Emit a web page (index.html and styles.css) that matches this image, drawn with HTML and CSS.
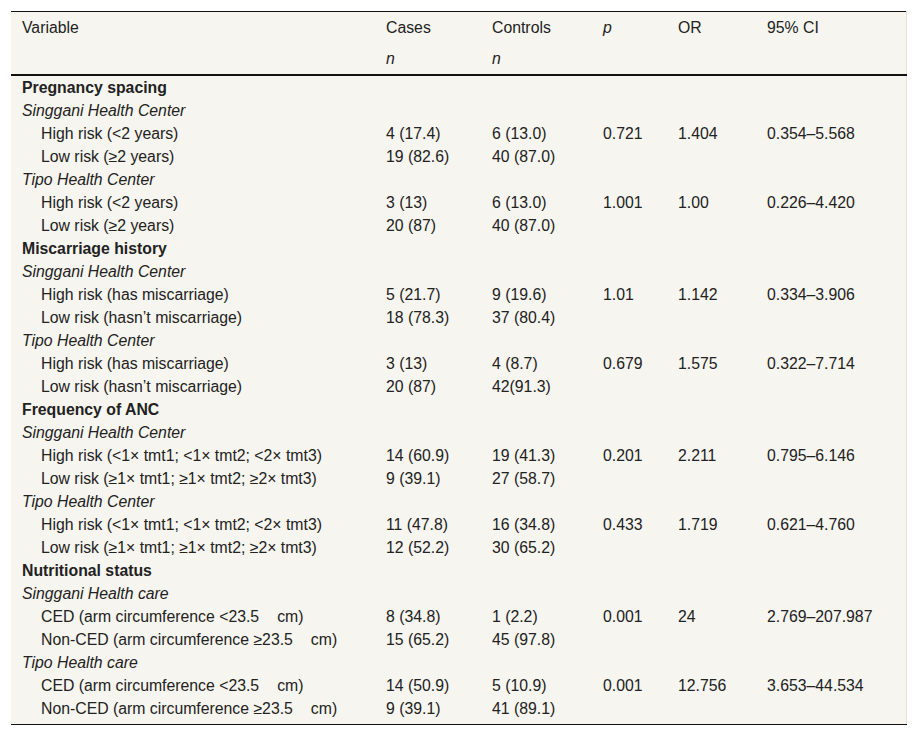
FILE: index.html
```html
<!DOCTYPE html>
<html lang="en">
<head>
<meta charset="utf-8">
<title>Table</title>
<link rel="stylesheet" href="styles.css">
</head>
<body>
<div class="wrap">
<table class="data">
<colgroup>
<col class="c-var"><col class="c-cases"><col class="c-ctrl"><col class="c-p"><col class="c-or"><col class="c-ci">
</colgroup>
<thead>
<tr class="h1"><th>Variable</th><th>Cases</th><th>Controls</th><th><i>p</i></th><th>OR</th><th>95% CI</th></tr>
<tr class="h2"><th></th><th><i>n</i></th><th><i>n</i></th><th></th><th></th><th></th></tr>
</thead>
<tbody>
<tr><td class="sec">Pregnancy spacing</td><td></td><td></td><td></td><td></td><td></td></tr>
<tr><td class="sub">Singgani Health Center</td><td></td><td></td><td></td><td></td><td></td></tr>
<tr><td class="ind">High risk (&lt;2 years)</td><td>4 (17.4)</td><td>6 (13.0)</td><td>0.721</td><td>1.404</td><td>0.354–5.568</td></tr>
<tr><td class="ind">Low risk (≥2 years)</td><td>19 (82.6)</td><td>40 (87.0)</td><td></td><td></td><td></td></tr>
<tr><td class="sub">Tipo Health Center</td><td></td><td></td><td></td><td></td><td></td></tr>
<tr><td class="ind">High risk (&lt;2 years)</td><td>3 (13)</td><td>6 (13.0)</td><td>1.001</td><td>1.00</td><td>0.226–4.420</td></tr>
<tr><td class="ind">Low risk (≥2 years)</td><td>20 (87)</td><td>40 (87.0)</td><td></td><td></td><td></td></tr>
<tr><td class="sec">Miscarriage history</td><td></td><td></td><td></td><td></td><td></td></tr>
<tr><td class="sub">Singgani Health Center</td><td></td><td></td><td></td><td></td><td></td></tr>
<tr><td class="ind">High risk (has miscarriage)</td><td>5 (21.7)</td><td>9 (19.6)</td><td>1.01</td><td>1.142</td><td>0.334–3.906</td></tr>
<tr><td class="ind">Low risk (hasn’t miscarriage)</td><td>18 (78.3)</td><td>37 (80.4)</td><td></td><td></td><td></td></tr>
<tr><td class="sub">Tipo Health Center</td><td></td><td></td><td></td><td></td><td></td></tr>
<tr><td class="ind">High risk (has miscarriage)</td><td>3 (13)</td><td>4 (8.7)</td><td>0.679</td><td>1.575</td><td>0.322–7.714</td></tr>
<tr><td class="ind">Low risk (hasn’t miscarriage)</td><td>20 (87)</td><td>42(91.3)</td><td></td><td></td><td></td></tr>
<tr><td class="sec">Frequency of ANC</td><td></td><td></td><td></td><td></td><td></td></tr>
<tr><td class="sub">Singgani Health Center</td><td></td><td></td><td></td><td></td><td></td></tr>
<tr><td class="ind">High risk (&lt;1× tmt1; &lt;1× tmt2; &lt;2× tmt3)</td><td>14 (60.9)</td><td>19 (41.3)</td><td>0.201</td><td>2.211</td><td>0.795–6.146</td></tr>
<tr><td class="ind">Low risk (≥1× tmt1; ≥1× tmt2; ≥2× tmt3)</td><td>9 (39.1)</td><td>27 (58.7)</td><td></td><td></td><td></td></tr>
<tr><td class="sub">Tipo Health Center</td><td></td><td></td><td></td><td></td><td></td></tr>
<tr><td class="ind">High risk (&lt;1× tmt1; &lt;1× tmt2; &lt;2× tmt3)</td><td>11 (47.8)</td><td>16 (34.8)</td><td>0.433</td><td>1.719</td><td>0.621–4.760</td></tr>
<tr><td class="ind">Low risk (≥1× tmt1; ≥1× tmt2; ≥2× tmt3)</td><td>12 (52.2)</td><td>30 (65.2)</td><td></td><td></td><td></td></tr>
<tr><td class="sec">Nutritional status</td><td></td><td></td><td></td><td></td><td></td></tr>
<tr><td class="sub">Singgani Health care</td><td></td><td></td><td></td><td></td><td></td></tr>
<tr><td class="ind">CED (arm circumference &lt;23.5<span class="gap"></span>cm)</td><td>8 (34.8)</td><td>1 (2.2)</td><td>0.001</td><td>24</td><td>2.769–207.987</td></tr>
<tr><td class="ind">Non-CED (arm circumference ≥23.5<span class="gap"></span>cm)</td><td>15 (65.2)</td><td>45 (97.8)</td><td></td><td></td><td></td></tr>
<tr><td class="sub">Tipo Health care</td><td></td><td></td><td></td><td></td><td></td></tr>
<tr><td class="ind">CED (arm circumference &lt;23.5<span class="gap"></span>cm)</td><td>14 (50.9)</td><td>5 (10.9)</td><td>0.001</td><td>12.756</td><td>3.653–44.534</td></tr>
<tr class="last"><td class="ind">Non-CED (arm circumference ≥23.5<span class="gap"></span>cm)</td><td>9 (39.1)</td><td>41 (89.1)</td><td></td><td></td><td></td></tr>
</tbody>
</table>
</div>
</body>
</html>
```

FILE: styles.css
```css
html, body {
  margin: 0;
  padding: 0;
  background: #ffffff;
}
.wrap {
  padding: 11px 10px 0 11px;
}
.data {
  width: 895px;
  table-layout: fixed;
  border-collapse: collapse;
  background: #f7f5ef;
  font-family: "Liberation Sans", Arial, sans-serif;
  font-size: 15.8px;
  color: #222222;
  border-top: 1px solid #111111;
  border-bottom: 1px solid #111111;
  border-right: 1px solid #e4e1da;
}
.c-var { width: 364px; }
.c-cases { width: 106px; }
.c-ctrl { width: 111px; }
.c-p { width: 75px; }
.c-or { width: 89px; }
.c-ci { width: 150px; }
.data th {
  font-weight: normal;
  text-align: left;
  padding: 7px 11px;
  line-height: 17px;
  vertical-align: middle;
}
.data .h2 th {
  border-bottom: 2px solid #111111;
}
.data td {
  padding: 3px 11px;
  line-height: 17px;
  white-space: nowrap;
  vertical-align: middle;
}
.data .last td {
  padding-bottom: 7px;
}
.sec {
  font-weight: bold;
}
.sub {
  font-style: italic;
}
.data td.ind {
  padding-left: 30px;
}
.gap {
  display: inline-block;
  width: 18px;
}
```
